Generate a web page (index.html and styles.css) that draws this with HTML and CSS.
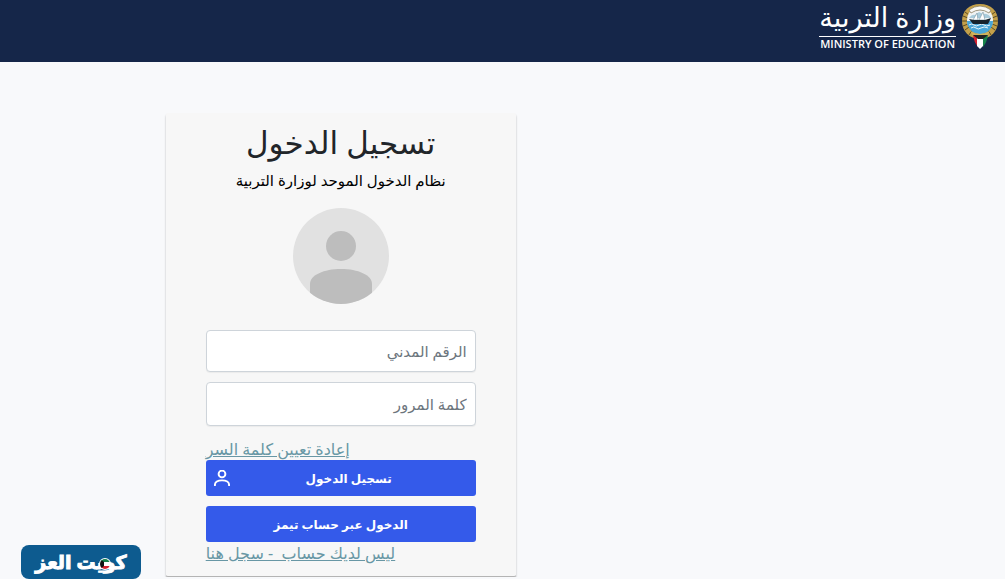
FILE: index.html
```html
<!DOCTYPE html>
<html lang="ar" dir="rtl">
<head>
<meta charset="utf-8">
<meta name="viewport" content="width=device-width, initial-scale=1">
<title>وزارة التربية - تسجيل الدخول</title>
<link rel="stylesheet" href="styles.css">
</head>
<body>
<header class="topbar">
  <svg class="emblem" viewBox="0 0 38 46" aria-hidden="true">
    <path d="M19 1C8 1 1 8 1 18c0 10 7 18 18 18s18-8 18-18C37 8 30 1 19 1z" fill="#c3a04a"/>
    <path d="M4 9l4 3M2 13l5 2M1 18h5M2 23l5-2M4 27l4-3M8 32l3-5M13 35l2-5M34 9l-4 3M36 13l-5 2M37 18h-5M36 23l-5-2M34 27l-4-3M30 32l-3-5M25 35l-2-5" stroke="#5d4c22" stroke-width="1"/>
    <circle cx="19" cy="17" r="13" fill="#f0f3f3"/>
    <path d="M6 18h26a13 13 0 0 1-26 0z" fill="#4aa6d8"/>
    <path d="M8 22q3-2 5 0t5 0 5 0 6 0M10 25q3-2 5 0t5 0 7 0" stroke="#e9f6fc" stroke-width="1" fill="none"/>
    <path d="M8 7q11-8 22 0l-2 3q-9-6-18 0z" fill="#f8f8f6" stroke="#8b8062" stroke-width=".8"/>
    <path d="M8 15q3-4 6-3l4-3 4 2q5-1 8 4z" fill="#a9ccdc"/>
    <path d="M12 17l4-7 1 7zM18 17l4-8 2 8z" fill="#fff" stroke="#73929f" stroke-width=".6"/>
    <path d="M8 16l5 1h11l6-2-3 6H12z" fill="#17232d"/>
    <path d="M9 28q10 6 20 0l-3 5q-7 3-14 0z" fill="#d0b25c"/>
    <path d="M12 32l5 2v10q-4-5-5-12z" fill="#d6212f"/>
    <path d="M16 34h6v9l-3 3-3-3z" fill="#fff"/>
    <path d="M22 34l5-2q-1 7-5 12z" fill="#16824a"/>
    <path d="M12 32h15l-5 4h-5z" fill="#222"/>
  </svg>
  <div class="ministry">
    <span class="ministry-ar">وزارة التربية</span>
    <span class="ministry-en" lang="en" dir="ltr">MINISTRY OF EDUCATION</span>
  </div>
</header>
<main class="page">
  <div class="login-column">
    <form class="card">
      <h1 class="title">تسجيل الدخول</h1>
      <p class="subtitle">نظام الدخول الموحد لوزارة التربية</p>
      <svg class="avatar" viewBox="0 0 96 96" aria-hidden="true">
        <defs><clipPath id="disc"><circle cx="48" cy="48" r="48"/></clipPath></defs>
        <circle cx="48" cy="48" r="48" fill="#e1e1e1"/>
        <g clip-path="url(#disc)" fill="#bdbdbd">
          <circle cx="48" cy="38" r="15"/>
          <path d="M17 96V76C17 67 31 61 48 61s31 6 31 15v20z"/>
        </g>
      </svg>
      <input class="field" type="text" placeholder="الرقم المدني" aria-label="الرقم المدني">
      <input class="field field-password" type="password" placeholder="كلمة المرور" aria-label="كلمة المرور">
      <a class="link" href="#reset">إعادة تعيين كلمة السر</a>
      <button class="button" type="submit">
        <span class="button-label">تسجيل الدخول</span>
        <svg class="user-icon" viewBox="0 0 16 16" aria-hidden="true" fill="none" stroke="#fff" stroke-width="1.9">
          <circle cx="8" cy="4" r="3.400"/>
          <path d="M.9 16v-1C.9 12 3.400 10.400 8 10.400s7.100 1.600 7.100 4.600v1"/>
        </svg>
      </button>
      <button class="button button-teams" type="button">الدخول عبر حساب تيمز</button>
      <a class="link" href="#register">ليس لديك حساب&nbsp; - سجل هنا</a>
    </form>
  </div>
</main>
<div class="brand">
  <span class="brand-text">كويت العز</span>
  <svg class="brand-flag" viewBox="0 0 12 12" aria-hidden="true">
    <defs><clipPath id="flag-disc"><circle cx="6" cy="6" r="5"/></clipPath></defs>
    <circle cx="6" cy="6" r="6" fill="#fff"/>
    <g clip-path="url(#flag-disc)">
      <path d="M0 0h12v4H0z" fill="#16824a"/>
      <path d="M0 8h12v4H0z" fill="#d6212f"/>
      <path d="M0 0l5 4v4l-5 4z" fill="#111"/>
    </g>
  </svg>
</div>
</body>
</html>
```
FILE: styles.css
```css
* { box-sizing: border-box; }
body {
  margin: 0;
  background: #f8f9fb;
  color: #212529;
  font-family: "Noto Sans", "Open Sans", "DejaVu Sans", sans-serif;
  font-size: 16px;
}
.topbar {
  display: flex;
  align-items: flex-start;
  gap: 5px;
  height: 62px;
  padding: 3px 6px;
  background: #152649;
  color: #fff;
}
.emblem { width: 38px; height: 46px; }
.ministry { display: flex; flex-direction: column; }
.ministry-ar {
  height: 34px;
  line-height: 28px;
  font-size: 27px;
  text-align: center;
  white-space: nowrap;
  border-bottom: 1px solid #fff;
}
.ministry-en {
  font-family: "Open Sans", sans-serif;
  font-size: 11px;
  line-height: 14px;
  font-weight: 600;
  text-align: center;
  white-space: nowrap;
}
.page { display: flex; justify-content: flex-end; padding-top: 51px; }
.login-column { display: flex; justify-content: center; width: 67.8%; }
.card {
  display: flex;
  flex-direction: column;
  width: 350px;
  padding: 9px 40px 12px;
  background: #f7f7f7;
  border-bottom: 1px solid #b4b4b4;
  border-radius: 2px;
  box-shadow: 0 2px 2px rgba(0, 0, 0, .3);
}
.title {
  margin: 0;
  font-size: 31px;
  line-height: 40px;
  font-weight: 500;
  text-align: center;
}
.subtitle {
  margin: 6px 0 0;
  color: #000;
  font-size: 15px;
  line-height: 24px;
  text-align: center;
}
.avatar { width: 96px; height: 96px; margin: 16px auto 26px; }
.field {
  width: 100%;
  height: 42px;
  margin: 0 0 10px;
  padding: 0 8px;
  border: 1px solid #ced4da;
  border-radius: 4px;
  background: #fff;
  font: inherit;
  font-size: 15px;
  box-shadow: 0 1px 1px rgba(0, 0, 0, .05);
}
.field-password { height: 44px; margin-bottom: 12px; }
.field::placeholder { color: #6c757d; opacity: 1; }
.link {
  align-self: flex-end;
  color: #6897a5;
  line-height: 22px;
  text-decoration: underline;
  white-space: nowrap;
}
.button {
  display: grid;
  grid-template-columns: 1fr 16px;
  align-items: center;
  width: 100%;
  height: 36px;
  margin: 0;
  padding: 0 8px;
  border: 0;
  border-radius: 3px;
  background: #345aea;
  color: #fff;
  font: inherit;
  font-size: 12px;
  font-weight: 700;
}
.button-label { text-align: center; }
.user-icon { width: 16px; height: 16px; }
.button-teams { grid-template-columns: 1fr; margin-top: 10px; }
.brand {
  position: absolute;
  left: 21px;
  bottom: 0;
  display: flex;
  align-items: center;
  justify-content: center;
  width: 120px;
  height: 34px;
  border-radius: 8px;
  background: #0d5b8f;
  color: #fff;
}
.brand-text {
  font-size: 19px;
  font-weight: 700;
  line-height: 34px;
  white-space: nowrap;
  -webkit-text-stroke: 1px currentColor;
}
.brand-flag { position: absolute; left: 78px; top: 13px; width: 12px; height: 12px; }
```
